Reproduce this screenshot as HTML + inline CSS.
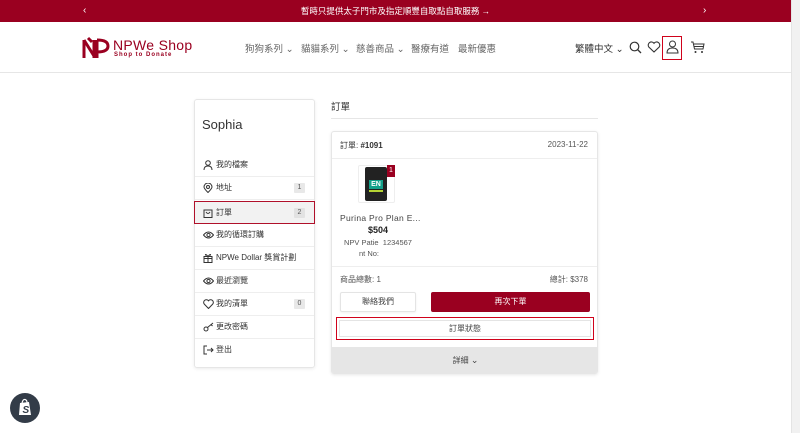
<!DOCTYPE html>
<html><head><meta charset="utf-8"><style>
*{box-sizing:border-box;margin:0;padding:0}
body{width:800px;height:433px;overflow:hidden;background:#fff;font-family:"Liberation Sans","Noto Sans CJK TC",sans-serif;color:#333;position:relative;font-size:8px}
.abs{position:absolute}
.top{left:0;top:0;width:791px;height:22px;background:#9a0020;color:#fff;font-size:8.5px;text-align:center;line-height:22px}
.sb{left:791px;top:0;width:9px;height:433px;background:#f1f1f1;border-left:1px solid #e4e4e4}
.hdr{left:0;top:72px;width:791px;height:1px;background:#e6e6e6}
.nav{top:41px;font-size:9.5px;color:#666}
.side{left:194px;top:99px;width:121px;height:269px;border:1px solid #e6e6e6;border-radius:3px;box-shadow:0 1px 3px rgba(0,0,0,.08)}
.item{position:absolute;left:0;width:119px;height:23px;border-bottom:1px solid #eee;font-size:8px;line-height:22px;padding-left:21px;color:#333}
.item svg{position:absolute;left:8px;top:6px}
.badge{position:absolute;right:9px;top:6px;width:11px;height:10px;background:#e8e8e8;font-size:7px;line-height:10px;text-align:center;color:#555;border-radius:1px}
.card{left:331px;top:131px;width:267px;height:243px;border:1px solid #e6e6e6;border-radius:3px;box-shadow:0 1px 3px rgba(0,0,0,.1);overflow:hidden}
</style></head><body>
<div class="abs top">暫時只提供太子門市及指定順豐自取點自取服務 →</div>
<div class="abs" style="left:83px;top:5px;color:#fff;font-size:10px">‹</div>
<div class="abs" style="left:703px;top:5px;color:#fff;font-size:10px">›</div>
<div class="abs sb"></div>
<svg class="abs" style="left:82px;top:36px" width="28" height="24" viewBox="0 0 28 24"><path d="M2 4 L2 22 M2 4 L12 20 M12 4 L12 22 M6 2 L10 6" stroke="#9a0020" stroke-width="3" fill="none"/><path d="M15 4 L15 22 M15 4 Q26 4 26 10 Q26 16 15 16" stroke="#9a0020" stroke-width="3" fill="none"/></svg>
<div class="abs" style="left:113px;top:37px;color:#9a0020;font-size:14px;letter-spacing:.3px">NPWe Shop</div>
<div class="abs" style="left:114px;top:52px;color:#9a0020;font-size:6px;font-weight:bold;letter-spacing:1px">Shop to Donate</div>
<div class="abs nav" style="left:245px">狗狗系列 ⌄</div>
<div class="abs nav" style="left:301px">貓貓系列 ⌄</div>
<div class="abs nav" style="left:356px">慈善商品 ⌄</div>
<div class="abs nav" style="left:411px">醫療有道</div>
<div class="abs nav" style="left:458px">最新優惠</div>
<div class="abs" style="left:575px;top:41px;font-size:9.5px;color:#333">繁體中文 ⌄</div>
<svg class="abs" style="left:629px;top:41px" width="13" height="13" viewBox="0 0 13 13"><circle cx="5.5" cy="5.5" r="4.3" stroke="#333" fill="none" stroke-width="1.2"/><path d="M8.5 8.5 L12 12" stroke="#333" stroke-width="1.3"/></svg>
<svg class="abs" style="left:647px;top:41px" width="14" height="12" viewBox="0 0 14 12"><path d="M7 11 L1.8 6 A3 3 0 0 1 7 2.3 A3 3 0 0 1 12.2 6 Z" stroke="#333" fill="none" stroke-width="1.1"/></svg>
<div class="abs" style="left:662px;top:36px;width:20px;height:24px;border:1.5px solid #d0021b"></div>
<svg class="abs" style="left:666px;top:40px" width="13" height="14" viewBox="0 0 13 14"><circle cx="6.5" cy="4" r="3" stroke="#333" fill="none"/><path d="M1 13 Q1 8 6.5 8 Q12 8 12 13 Z" stroke="#333" fill="none"/></svg>
<svg class="abs" style="left:690px;top:41px" width="15" height="13" viewBox="0 0 15 13"><path d="M1 1 L3 1 L4.5 8 L13 8 L14 3 L4 3 M4 5.5 L13.5 5.5" stroke="#333" fill="none"/><circle cx="5.5" cy="11" r="1" fill="#333"/><circle cx="12" cy="11" r="1" fill="#333"/></svg>
<div class="abs hdr"></div>

<div class="abs side">
<div class="abs" style="left:7px;top:17px;font-size:13px;color:#333">Sophia</div>
<div class="item" style="top:54px">我的檔案<svg width="10" height="10" viewBox="0 0 10 10"><circle cx="5" cy="3" r="2.3" stroke="#333" fill="none"/><path d="M1 10 Q1 6 5 6 Q9 6 9 10" stroke="#333" fill="none"/></svg></div>
<div class="item" style="top:77px">地址<svg width="10" height="10" viewBox="0 0 10 10"><path d="M5 9.5 Q1 5.5 1 4 A4 4 0 0 1 9 4 Q9 5.5 5 9.5Z" stroke="#333" fill="none"/><circle cx="5" cy="4" r="1.5" stroke="#333" fill="none"/></svg><span class="badge">1</span></div>
<div class="item" style="top:101px;background:#f2f2f2;border:1.5px solid #b0102a;left:-1px;width:121px;height:23px">訂單<svg width="10" height="10" viewBox="0 0 10 10"><rect x="1" y="2" width="8" height="7.5" stroke="#333" fill="none"/><path d="M3 4 Q5 7 7 4" stroke="#333" fill="none"/></svg><span class="badge" style="background:#e2e2e2">2</span></div>
<div class="item" style="top:124px">我的循環訂購<svg width="11" height="10" viewBox="0 0 11 10"><path d="M0.5 5 Q5.5 -1 10.5 5 Q5.5 11 0.5 5Z" stroke="#333" fill="none"/><circle cx="5.5" cy="5" r="1.6" stroke="#333" fill="none"/></svg></div>
<div class="item" style="top:147px">NPWe Dollar 獎賞計劃<svg width="10" height="10" viewBox="0 0 10 10"><rect x="1" y="3.5" width="8" height="6" stroke="#333" fill="none"/><path d="M5 3.5 V9.5 M1 5.5 H9 M5 3.5 Q2 0 2.5 2.5 M5 3.5 Q8 0 7.5 2.5" stroke="#333" fill="none"/></svg></div>
<div class="item" style="top:170px">最近瀏覽<svg width="11" height="10" viewBox="0 0 11 10"><path d="M0.5 5 Q5.5 -1 10.5 5 Q5.5 11 0.5 5Z" stroke="#333" fill="none"/><circle cx="5.5" cy="5" r="1.6" stroke="#333" fill="none"/></svg></div>
<div class="item" style="top:193px">我的清單<svg width="11" height="10" viewBox="0 0 11 10"><path d="M5.5 9.5 L1.2 5 A2.5 2.5 0 0 1 5.5 1.8 A2.5 2.5 0 0 1 9.8 5 Z" stroke="#333" fill="none"/></svg><span class="badge">0</span></div>
<div class="item" style="top:216px">更改密碼<svg width="11" height="10" viewBox="0 0 11 10"><circle cx="3" cy="7" r="2" stroke="#333" fill="none"/><path d="M4.5 5.5 L10 1 M8 2.5 L9.5 4" stroke="#333" fill="none"/></svg></div>
<div class="item" style="top:239px;border:none">登出<svg width="11" height="10" viewBox="0 0 11 10"><path d="M4 1 H1 V9 H4 M4 5 H10 M8 3 L10 5 L8 7" stroke="#333" fill="none"/></svg></div>
</div>

<div class="abs" style="left:331px;top:99px;font-size:9.5px;color:#333">訂單</div>
<div class="abs" style="left:331px;top:118px;width:267px;height:1px;background:#e6e6e6"></div>
<div class="abs card">
 <div class="abs" style="left:8px;top:8px;font-size:8px">訂單: <b>#1091</b></div>
 <div class="abs" style="right:9px;top:8px;font-size:8px;color:#555">2023-11-22</div>
 <div class="abs" style="left:0;top:26px;width:267px;height:1px;background:#eee"></div>
 <div class="abs" style="left:26px;top:33px;width:37px;height:38px;border:1px solid #eee;border-radius:2px;background:#fff"></div>
 <div class="abs" style="left:33px;top:35px;width:22px;height:34px;background:#222;border-radius:2px"></div>
 <div class="abs" style="left:37px;top:48px;width:14px;height:9px;background:#13a08a;color:#fff;font-size:7px;font-weight:bold;line-height:9px;text-align:center">EN</div>
 <div class="abs" style="left:37px;top:58px;width:14px;height:2px;background:#b5d334"></div>
 <div class="abs" style="left:55px;top:33px;width:8px;height:12px;background:#9a0020;color:#fff;font-size:7px;line-height:12px;text-align:center">1</div>
 <div class="abs" style="left:8px;top:81px;font-size:8.5px;color:#444;letter-spacing:.3px">Purina Pro Plan E...</div>
 <div class="abs" style="left:36px;top:93px;font-size:9px;font-weight:bold;color:#222">$504</div>
 <div class="abs" style="left:12px;top:105px;font-size:7.5px;color:#555;line-height:11px;white-space:nowrap">NPV Patie&nbsp; 1234567</div>
 <div class="abs" style="left:27px;top:116px;font-size:7.5px;color:#555;line-height:11px;white-space:nowrap">nt No:</div>
 <div class="abs" style="left:0;top:134px;width:267px;height:1px;background:#eee"></div>
 <div class="abs" style="left:8px;top:142px;font-size:8px;color:#555">商品總數: 1</div>
 <div class="abs" style="right:9px;top:142px;font-size:8px;color:#555">總計: $378</div>
 <div class="abs" style="left:8px;top:160px;width:76px;height:20px;border:1px solid #e4e4e4;border-radius:2px;text-align:center;line-height:18px;font-size:8px;color:#444;box-shadow:0 1px 2px rgba(0,0,0,.06)">聯絡我們</div>
 <div class="abs" style="left:99px;top:160px;width:159px;height:20px;background:#9a0020;border-radius:2px;text-align:center;line-height:20px;font-size:8px;color:#fff">再次下單</div>
 <div class="abs" style="left:4px;top:185px;width:258px;height:23px;border:1.5px solid #d0021b;padding:2px"><div style="border:1px solid #e4e4e4;height:100%;text-align:center;line-height:16px;font-size:8px;color:#444">訂單狀態</div></div>
 <div class="abs" style="left:0;top:215px;width:267px;height:28px;background:#e6e6e6;text-align:center;line-height:26px;font-size:8px;color:#444">詳細 <span style="font-size:9px">⌄</span></div>
</div>

<div class="abs" style="left:10px;top:393px;width:30px;height:30px;border-radius:50%;background:#333c48"></div>
<svg class="abs" style="left:17px;top:398px" width="16" height="19" viewBox="0 0 16 19"><path d="M3 5 L12 4 L14 17 L2 17 Z" fill="#fff"/><path d="M5 5 Q6 1 8 1.5 Q10 2 10 4.5" stroke="#fff" fill="none" stroke-width="1.2"/><text x="5.5" y="15" font-family="Liberation Sans" font-weight="bold" font-style="italic" font-size="10" fill="#333c48">S</text></svg>
</body></html>
